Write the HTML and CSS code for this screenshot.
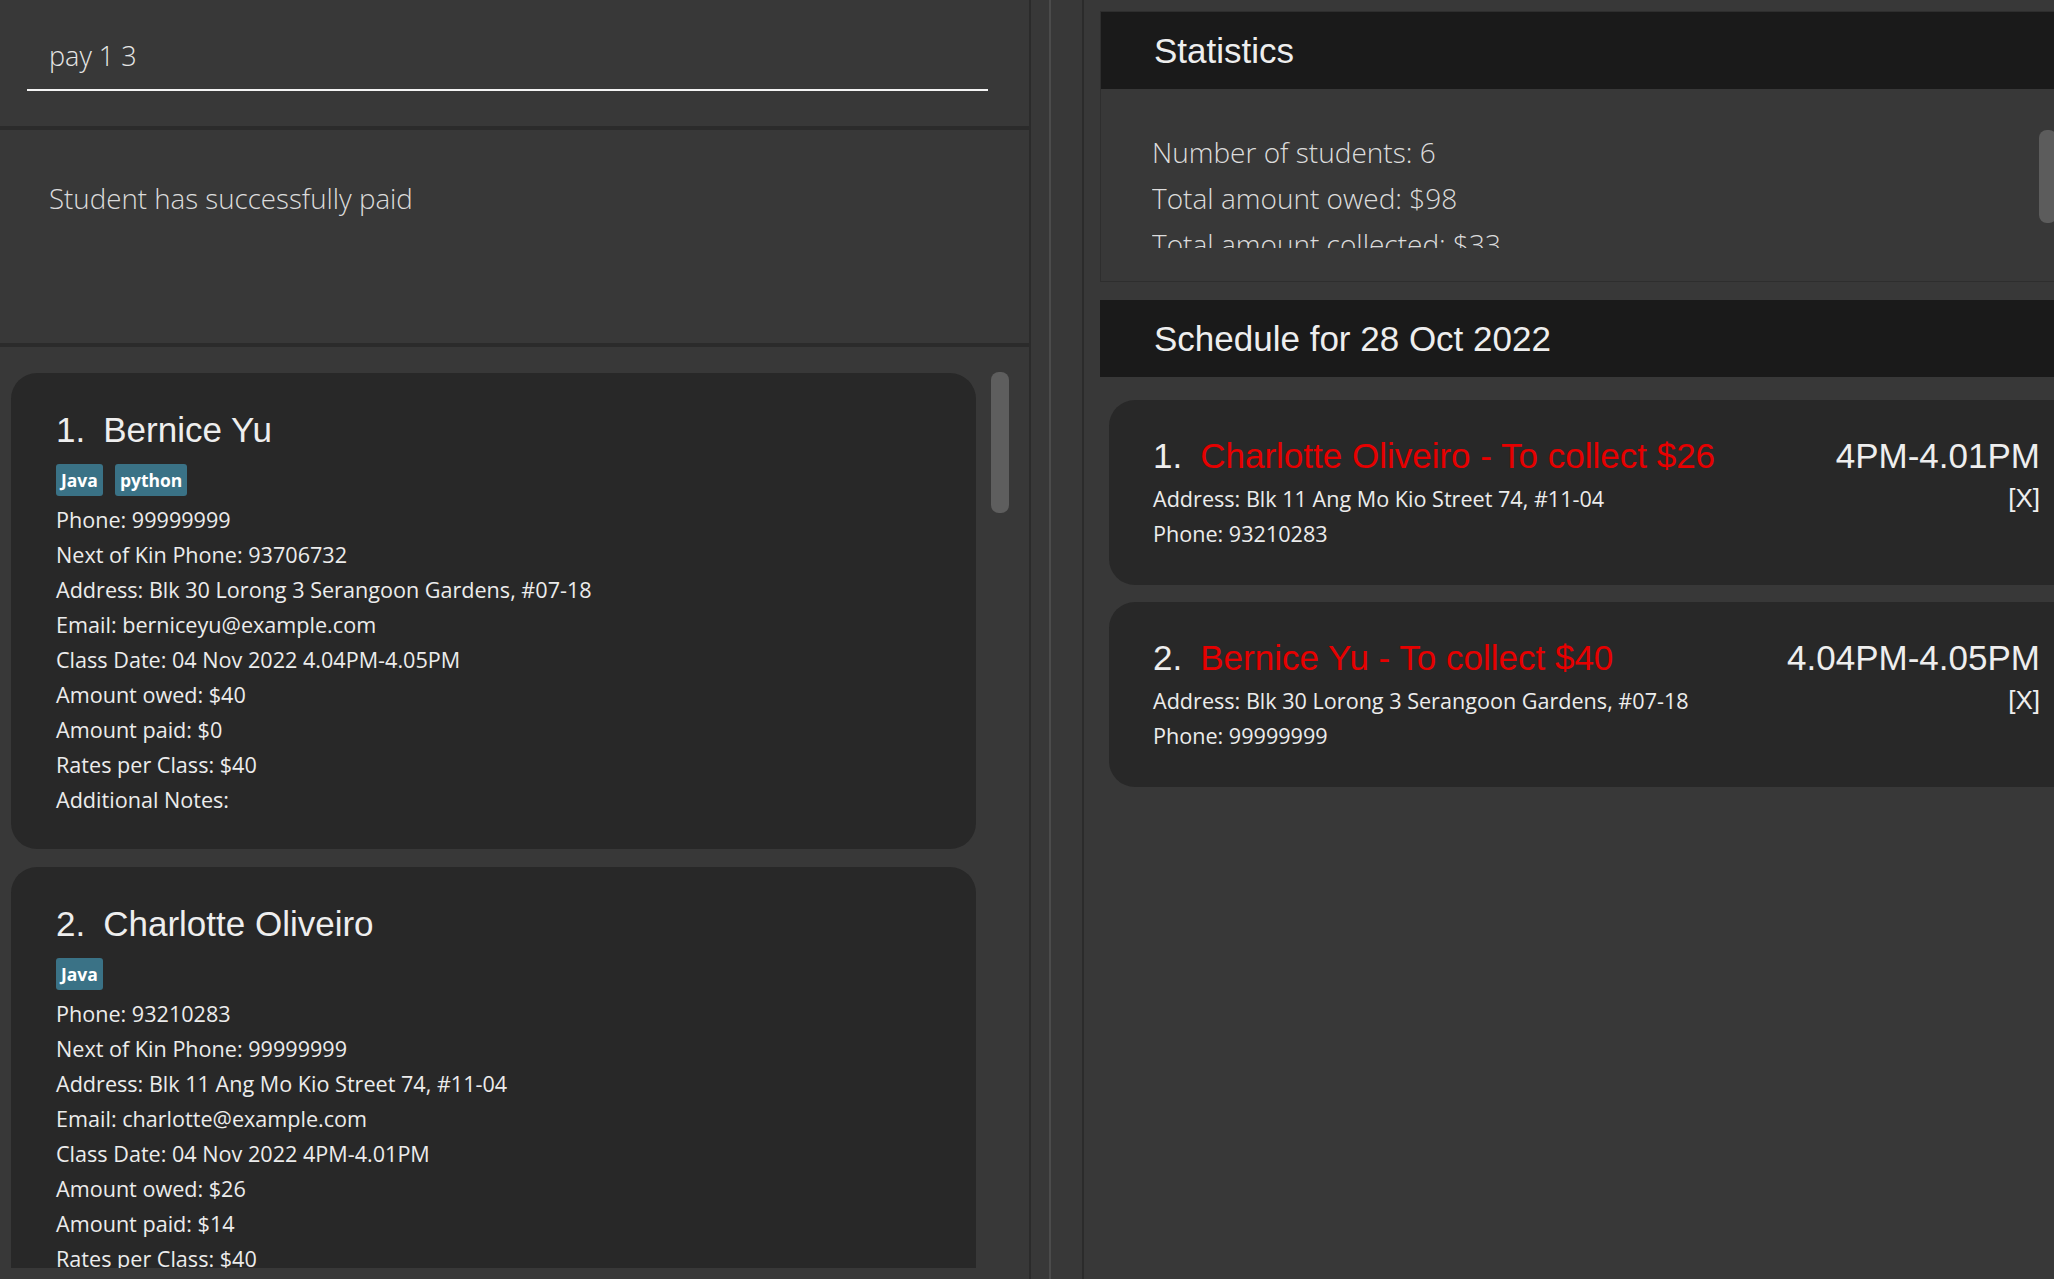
FILE: index.html
```html
<!DOCTYPE html>
<html lang="en">
<head>
<meta charset="utf-8">
<title>Tutor App</title>
<link rel="stylesheet" href="styles.css">
</head>
<body>
<div class="app">
  <section class="left">
    <div class="command">
      <div class="command-input">pay 1 3</div>
    </div>
    <div class="result">Student has successfully paid</div>
    <div class="list">
      <article class="card">
        <div class="name"><span class="idx">1.</span>Bernice Yu</div>
        <div class="tags"><span class="tag">Java</span><span class="tag">python</span></div>
        <div class="detail">Phone: 99999999</div>
        <div class="detail">Next of Kin Phone: 93706732</div>
        <div class="detail">Address: Blk 30 Lorong 3 Serangoon Gardens, #07-18</div>
        <div class="detail">Email: berniceyu@example.com</div>
        <div class="detail">Class Date: 04 Nov 2022 4.04PM-4.05PM</div>
        <div class="detail">Amount owed: $40</div>
        <div class="detail">Amount paid: $0</div>
        <div class="detail">Rates per Class: $40</div>
        <div class="detail">Additional Notes:</div>
      </article>
      <article class="card">
        <div class="name"><span class="idx">2.</span>Charlotte Oliveiro</div>
        <div class="tags"><span class="tag">Java</span></div>
        <div class="detail">Phone: 93210283</div>
        <div class="detail">Next of Kin Phone: 99999999</div>
        <div class="detail">Address: Blk 11 Ang Mo Kio Street 74, #11-04</div>
        <div class="detail">Email: charlotte@example.com</div>
        <div class="detail">Class Date: 04 Nov 2022 4PM-4.01PM</div>
        <div class="detail">Amount owed: $26</div>
        <div class="detail">Amount paid: $14</div>
        <div class="detail">Rates per Class: $40</div>
        <div class="detail">Additional Notes:</div>
      </article>
      <div class="scroll-thumb"></div>
    </div>
  </section>
  <div class="divider"></div>
  <section class="right">
    <div class="stats">
      <div class="panel-header">Statistics</div>
      <div class="stats-body">
        <div class="stats-viewport">
          <div class="stat">Number of students: 6</div>
          <div class="stat">Total amount owed: $98</div>
          <div class="stat">Total amount collected: $33</div>
        </div>
        <div class="stats-thumb"></div>
      </div>
    </div>
    <div class="panel-header schedule-header">Schedule for 28 Oct 2022</div>
    <div class="schedule">
      <article class="scard">
        <div class="scard-main">
          <div class="name"><span class="idx">1.</span><span class="due">Charlotte Oliveiro - To collect $26</span></div>
          <div class="sdetail">Address: Blk 11 Ang Mo Kio Street 74, #11-04</div>
          <div class="sdetail">Phone: 93210283</div>
        </div>
        <div class="scard-side">
          <div class="time">4PM-4.01PM</div>
          <div class="remove">[X]</div>
        </div>
      </article>
      <article class="scard">
        <div class="scard-main">
          <div class="name"><span class="idx">2.</span><span class="due">Bernice Yu - To collect $40</span></div>
          <div class="sdetail">Address: Blk 30 Lorong 3 Serangoon Gardens, #07-18</div>
          <div class="sdetail">Phone: 99999999</div>
        </div>
        <div class="scard-side">
          <div class="time">4.04PM-4.05PM</div>
          <div class="remove">[X]</div>
        </div>
      </article>
    </div>
  </section>
</div>
</body>
</html>
```

FILE: styles.css
```css
* {
  box-sizing: border-box;
}

html, body {
  margin: 0;
  padding: 0;
}

body {
  width: 2054px;
  height: 1279px;
  overflow: hidden;
  background: #383838;
  color: #eeeeee;
  font-family: "Open Sans", "Noto Sans", sans-serif;
}

.app {
  display: flex;
  height: 1279px;
  width: 2200px;
}

/* ---------- left pane ---------- */
.left {
  flex: none;
  width: 1031px;
  border-right: 2px solid #2b2b2b;
  display: flex;
  flex-direction: column;
  height: 1279px;
}

.command {
  flex: none;
  height: 130px;
  padding: 36px 41px 0 27px;
  border-bottom: 4px solid #2b2b2b;
}

.command-input {
  padding: 0 0 13px 22px;
  border-bottom: 2px solid #f4f4f4;
  font-size: 27px;
  font-weight: 300;
  line-height: 40px;
  color: #e6e6e6;
}

.result {
  flex: none;
  height: 217px;
  padding: 48px 0 0 49px;
  border-bottom: 4px solid #2b2b2b;
  font-size: 27.7px;
  font-weight: 300;
  line-height: 40px;
  color: #dcdcdc;
}

.list {
  position: relative;
  flex: none;
  height: 921px;
  overflow: hidden;
  padding: 26px 0 0 11px;
}

.card {
  width: 965px;
  background: #282828;
  border-radius: 26px;
  padding: 37px 45px 32px 45px;
  margin-bottom: 18px;
}

.name {
  font-family: "Liberation Sans", Arial, sans-serif;
  font-size: 35px;
  line-height: 40px;
  color: #eeeeee;
  white-space: nowrap;
}

.idx {
  margin-right: 18px;
}

.tags {
  display: flex;
  gap: 12px;
  margin-top: 14px;
  margin-bottom: 6px;
}

.tag {
  height: 32px;
  padding: 0 5px;
  border-radius: 3px;
  background: #3a7286;
  color: #ffffff;
  font-size: 17.5px;
  font-weight: 700;
  line-height: 32px;
}

.detail {
  font-size: 21.6px;
  line-height: 35px;
  color: #ececec;
  white-space: nowrap;
}

.scroll-thumb {
  position: absolute;
  left: 991px;
  top: 25px;
  width: 18px;
  height: 141px;
  border-radius: 8px;
  background: #5e5e5e;
}

/* ---------- divider ---------- */
.divider {
  flex: none;
  width: 33px;
  margin-left: 18px;
  border-left: 2px solid #4b4b4b;
}

/* ---------- right pane ---------- */
.right {
  flex: none;
  width: 1040px;
  border-left: 2px solid #2b2b2b;
  padding: 11px 0 0 16px;
}

.stats {
  width: 967px;
  border: 1px solid #2e2e2e;
}

.panel-header {
  height: 77px;
  padding-left: 54px;
  background: #1a1a1a;
  font-family: "Liberation Sans", Arial, sans-serif;
  font-size: 35px;
  line-height: 77px;
  color: #eeeeee;
}

.stats .panel-header {
  padding-left: 53px;
}

.stats-body {
  position: relative;
  height: 192px;
  padding: 16px 0 0 51px;
}

.stats-viewport {
  height: 143px;
  overflow: hidden;
  padding-top: 24px;
}

.stat {
  font-size: 28px;
  font-weight: 300;
  line-height: 46px;
  color: #dcdcdc;
  white-space: nowrap;
}

.stats-thumb {
  position: absolute;
  left: 938px;
  top: 41px;
  width: 18px;
  height: 93px;
  border-radius: 8px;
  background: #5c5c5c;
}

.schedule-header {
  width: 967px;
  margin-top: 18px;
}

.schedule {
  padding: 23px 0 0 9px;
  display: flex;
  flex-direction: column;
  gap: 17px;
}

.scard {
  width: 976px;
  display: flex;
  justify-content: space-between;
  background: #282828;
  border-radius: 26px;
  padding: 36px 45px 34px 44px;
}

.due {
  color: #e60000;
}

.sdetail {
  font-size: 21.6px;
  line-height: 35px;
  color: #ececec;
  white-space: nowrap;
}

.scard-main .name {
  margin-bottom: 5px;
}

.scard-side {
  text-align: right;
}

.time {
  font-family: "Liberation Sans", Arial, sans-serif;
  font-size: 35px;
  line-height: 40px;
  color: #eeeeee;
  margin-bottom: 5px;
  white-space: nowrap;
}

.remove {
  font-family: "Liberation Sans", Arial, sans-serif;
  font-size: 26px;
  line-height: 35px;
  color: #eeeeee;
}
```
